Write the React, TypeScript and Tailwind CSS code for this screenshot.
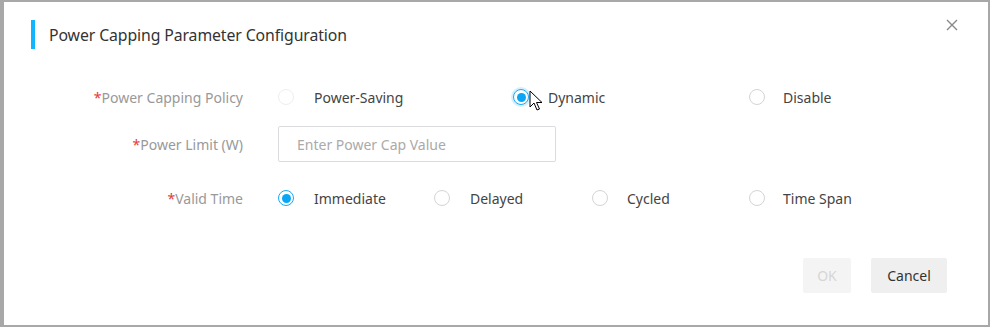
import React from "react";

const font = { fontFamily: '"Noto Sans", "Open Sans", sans-serif' };

function Radio({ checked, faint, halo }: { checked?: boolean; faint?: boolean; halo?: boolean }) {
  if (checked) {
    return (
      <span
        className={`flex h-[16px] w-[16px] shrink-0 items-center justify-center rounded-full border-[1.5px] border-[#1aa9f2] bg-white ${halo ? "shadow-[0_0_0_2px_rgba(26,169,242,0.18)]" : ""}`}
      >
        <span className="h-[9px] w-[9px] rounded-full bg-[#0aa6f5]" />
      </span>
    );
  }
  return (
    <span
      className={`h-[16px] w-[16px] shrink-0 rounded-full border bg-white ${faint ? "border-[#eeeeee]" : "border-[#d4d4d4]"}`}
    />
  );
}

function Option({ label, checked, faint, halo, w, gap }: { label: string; checked?: boolean; faint?: boolean; halo?: boolean; w: string; gap?: string }) {
  return (
    <div className={`flex items-center ${gap ?? "gap-[20px]"} ${w}`}>
      <Radio checked={checked} faint={faint} halo={halo} />
      <span className="text-[14px] text-[#444]">{label}</span>
    </div>
  );
}

function Label({ text }: { text: string }) {
  return (
    <div className="w-[239px] shrink-0 text-right text-[14px] text-[#999]">
      <span className="text-[#e23c3c]">*</span>
      {text}
    </div>
  );
}

export default function App() {
  return (
    <div className="h-[327px] w-[990px] bg-[#a8a8a8] pb-[2px] pl-[4px] pr-[2px] pt-[2px]" style={font}>
      <div className="relative flex h-full flex-col bg-white">
        <div className="flex items-center gap-[14px] pl-[27px] pt-[18px]">
          <span className="h-[29px] w-[4px] bg-[#10b4ff]" />
          <span className="mt-[3px] text-[15.8px] tracking-[-0.1px] text-[#333]">Power Capping Parameter Configuration</span>
        </div>
        <button className="absolute right-[30px] top-[17px] text-[#888]" aria-label="close">
          <svg width="12" height="12" viewBox="0 0 12 12" fill="none" stroke="currentColor" strokeWidth="1.4">
            <path d="M1 1 L11 11 M11 1 L1 11" />
          </svg>
        </button>

        <div className="mt-[30px] flex flex-col">
          <div className="flex h-[36px] items-center gap-[35px]">
            <Label text="Power Capping Policy" />
            <div className="flex items-center">
              <Option label="Power-Saving" faint w="w-[235px]" />
              <Option label="Dynamic" checked halo w="w-[236px]" gap="gap-[19px]" />
              <Option label="Disable" w="w-[120px]" gap="gap-[18px]" />
            </div>
          </div>
          <div className="mt-[11px] flex h-[36px] items-center gap-[35px]">
            <Label text="Power Limit (W)" />
            <div className="flex h-[36px] w-[278px] items-center rounded-[2px] border border-[#dcdce0] pl-[18px] text-[14px] text-[#aaa]">
              Enter Power Cap Value
            </div>
          </div>
          <div className="mt-[18px] flex h-[36px] items-center gap-[35px]">
            <Label text="Valid Time" />
            <div className="flex items-center">
              <Option label="Immediate" checked w="w-[156px]" />
              <Option label="Delayed" w="w-[158px]" />
              <Option label="Cycled" w="w-[157px]" gap="gap-[19px]" />
              <Option label="Time Span" w="w-[120px]" gap="gap-[18px]" />
            </div>
          </div>
        </div>

        <div className="mt-[42px] flex justify-end gap-[20px] pr-[41px]">
          <div className="flex h-[35px] w-[48px] items-center justify-center rounded-[2px] bg-[#f4f4f4] text-[14px] text-[#d6d6d6]">
            OK
          </div>
          <div className="flex h-[35px] w-[76px] items-center justify-center rounded-[2px] bg-[#efefef] text-[14px] text-[#333]">
            Cancel
          </div>
        </div>

        <svg className="absolute left-[525px] top-[88px]" width="14" height="22" viewBox="0 0 14 22">
          <path d="M1 1 L1 17 L5 13 L8 20 L10.5 19 L7.5 12.5 L13 12.5 Z" fill="white" stroke="black" strokeWidth="1" strokeLinejoin="round" />
        </svg>
      </div>
    </div>
  );
}
